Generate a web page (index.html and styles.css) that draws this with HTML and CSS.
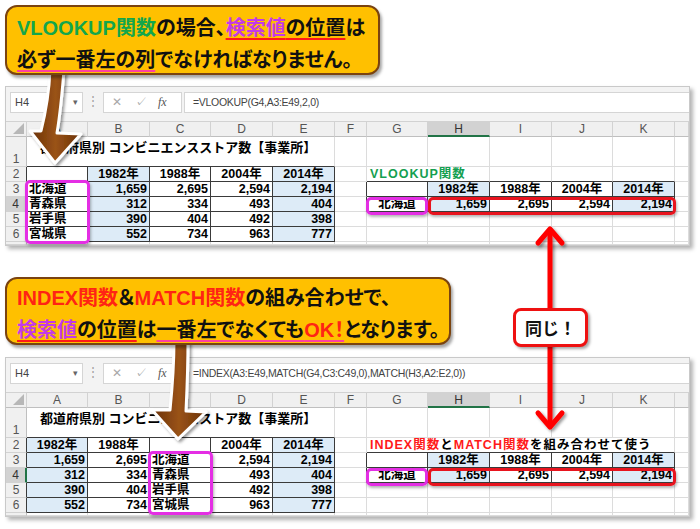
FILE: index.html
```html
<!DOCTYPE html>
<html lang="ja">
<head>
<meta charset="utf-8">
<title>VLOOKUP vs INDEX MATCH</title>
<link rel="stylesheet" href="styles.css">
</head>
<body>
<div class="page">
  <div class="callout c1">
    <div><span class="grn">VLOOKUP関数</span>の場合、<span class="ul-red"><span class="pur">検索値</span>の位置</span>は</div>
    <div><span class="ul-pink">必ず一番左の列</span>でなければなりません。</div>
  </div>

  <div class="win w1">
    <div class="fbar">
      <div class="namebox"><span>H4</span><span class="dd">▾</span></div>
      <div class="sep">⋮</div>
      <div class="fxbox"><span class="x">✕</span><span class="ck">✓</span><span class="fx">fx</span></div>
      <div class="formula">=VLOOKUP(G4,A3:E49,2,0)</div>
    </div>
    <div class="grid">
      <div class="h corner"></div><div class="h">A</div><div class="h">B</div><div class="h">C</div><div class="h">D</div><div class="h">E</div><div class="h">F</div><div class="h">G</div><div class="h s">H</div><div class="h">I</div><div class="h">J</div><div class="h">K</div><div class="h"></div>

      <div class="r">1</div><div class="t kb">都道府県別 コンビニエンスストア数【事業所】</div><div></div><div></div><div></div><div></div><div></div><div></div><div></div>

      <div class="r kr">2</div><div class="k"></div><div class="k b m">1982年</div><div class="k m">1988年</div><div class="k m">2004年</div><div class="k b m">2014年</div><div></div><div class="kb lbl grn sp2">VLOOKUP関数</div><div class="kb"></div><div class="kb"></div><div class="kb"></div><div></div>

      <div class="r kr">3</div><div class="k">北海道</div><div class="k b n">1,659</div><div class="k n">2,695</div><div class="k n">2,594</div><div class="k b n">2,194</div><div class="kr"></div><div class="k"></div><div class="k b m">1982年</div><div class="k m">1988年</div><div class="k m">2004年</div><div class="k b m">2014年</div><div></div>

      <div class="r kr sr">4</div><div class="k">青森県</div><div class="k b n">312</div><div class="k n">334</div><div class="k n">493</div><div class="k b n">404</div><div class="kr"></div><div class="k m">北海道</div><div class="k b n">1,659</div><div class="k n">2,695</div><div class="k n">2,594</div><div class="k b n">2,194</div><div></div>

      <div class="r kr">5</div><div class="k">岩手県</div><div class="k b n">390</div><div class="k n">404</div><div class="k n">492</div><div class="k b n">398</div><div></div><div></div><div></div><div></div><div></div><div></div><div></div>

      <div class="r kr">6</div><div class="k">宮城県</div><div class="k b n">552</div><div class="k n">734</div><div class="k n">963</div><div class="k b n">777</div><div></div><div></div><div></div><div></div><div></div><div></div><div></div>

      <div class="r"></div><div></div><div></div><div></div><div></div><div></div><div></div><div></div><div></div><div></div><div></div><div></div><div></div>
    </div>
    <div class="hl hl-mg pos-a"></div>
    <div class="hl hl-mg pos-g"></div>
    <div class="hl hl-rd pos-r"></div>
  </div>

  <div class="callout c2">
    <div><span class="red">INDEX関数</span>＆<span class="red">MATCH関数</span>の組み合わせで、</div>
    <div><span class="ul-red"><span class="pur">検索値</span>の位置</span>は<span class="ul-pink">一番左でなくても<span class="red">OK！</span></span>となります。</div>
  </div>

  <div class="win w2">
    <div class="fbar">
      <div class="namebox"><span>H4</span><span class="dd">▾</span></div>
      <div class="sep">⋮</div>
      <div class="fxbox"><span class="x">✕</span><span class="ck">✓</span><span class="fx">fx</span></div>
      <div class="formula">=INDEX(A3:E49,MATCH(G4,C3:C49,0),MATCH(H3,A2:E2,0))</div>
    </div>
    <div class="grid">
      <div class="h corner"></div><div class="h">A</div><div class="h">B</div><div class="h">C</div><div class="h">D</div><div class="h">E</div><div class="h">F</div><div class="h">G</div><div class="h s">H</div><div class="h">I</div><div class="h">J</div><div class="h">K</div><div class="h"></div>

      <div class="r">1</div><div class="t kb">都道府県別 コンビニエンスストア数【事業所】</div><div></div><div></div><div></div><div></div><div></div><div></div><div></div>

      <div class="r kr">2</div><div class="k b m">1982年</div><div class="k m">1988年</div><div class="k"></div><div class="k m">2004年</div><div class="k b m">2014年</div><div></div><div class="kb lbl sp5"><span class="red">INDEX関数</span>と<span class="red">MATCH関数</span>を組み合わせて使う</div><div></div>

      <div class="r kr">3</div><div class="k b n">1,659</div><div class="k n">2,695</div><div class="k">北海道</div><div class="k n">2,594</div><div class="k b n">2,194</div><div class="kr"></div><div class="k"></div><div class="k b m">1982年</div><div class="k m">1988年</div><div class="k m">2004年</div><div class="k b m">2014年</div><div></div>

      <div class="r kr sr">4</div><div class="k b n">312</div><div class="k n">334</div><div class="k">青森県</div><div class="k n">493</div><div class="k b n">404</div><div class="kr"></div><div class="k m">北海道</div><div class="k b n">1,659</div><div class="k n">2,695</div><div class="k n">2,594</div><div class="k b n">2,194</div><div></div>

      <div class="r kr">5</div><div class="k b n">390</div><div class="k n">404</div><div class="k">岩手県</div><div class="k n">492</div><div class="k b n">398</div><div></div><div></div><div></div><div></div><div></div><div></div><div></div>

      <div class="r kr">6</div><div class="k b n">552</div><div class="k n">734</div><div class="k">宮城県</div><div class="k n">963</div><div class="k b n">777</div><div></div><div></div><div></div><div></div><div></div><div></div><div></div>

      <div class="r"></div><div></div><div></div><div></div><div></div><div></div><div></div><div></div><div></div><div></div><div></div><div></div><div></div>
    </div>
    <div class="hl hl-mg pos-c"></div>
    <div class="hl hl-mg pos-g"></div>
    <div class="hl hl-rd pos-r"></div>
  </div>

  <svg class="overlay" width="700" height="529" viewBox="0 0 700 529" aria-hidden="true">
    <defs>
      <linearGradient id="brown" x1="0" y1="0" x2="1" y2="0">
        <stop offset="0" stop-color="#6a3105"/>
        <stop offset="0.5" stop-color="#9a5318"/>
        <stop offset="1" stop-color="#6a3105"/>
      </linearGradient>
      <filter id="sh" x="-30%" y="-30%" width="160%" height="160%">
        <feDropShadow dx="2" dy="2" stdDeviation="1.5" flood-color="#000" flood-opacity="0.4"/>
      </filter>
    </defs>
    <path d="M50 70 C49 95 45 115 41 131 L30 131 L55 163 L81 134 L57 133 C60 115 62 95 64 70 Z" fill="url(#brown)" stroke="#fff" stroke-width="3" stroke-linejoin="round" filter="url(#sh)"/>
    <path d="M174 340 C174 370 172 390 170 410 L152 410 L178 439 L206 412 L186 411 C187 390 188 370 188 340 Z" fill="url(#brown)" stroke="#fff" stroke-width="3" stroke-linejoin="round" filter="url(#sh)"/>
    <g stroke="#ff0000" stroke-width="5" stroke-linecap="round" stroke-linejoin="round" fill="none" filter="url(#sh)">
      <line x1="550" y1="231" x2="550" y2="425"/>
      <polyline points="538,243 550,229 562,243"/>
      <polyline points="538,413 550,427 562,413"/>
    </g>
  </svg>

  <div class="same">同じ！</div>
</div>
</body>
</html>
```

FILE: styles.css
```css
* { box-sizing: border-box; }
html, body { margin: 0; padding: 0; background: #fff; }

.page {
  position: relative;
  width: 700px;
  height: 529px;
  padding: 5px 0 0 5px;
  overflow: hidden;
  font-family: "Liberation Sans", "Noto Sans CJK JP", sans-serif;
}

/* callouts */
.callout {
  position: relative;
  z-index: 2;
  background: #ffc000;
  border: 2px solid #7a4310;
  border-radius: 12px;
  box-shadow: 2px 3px 3px rgba(0, 0, 0, 0.35);
  font: 700 20px/32px "Liberation Sans", "Noto Sans CJK JP", sans-serif;
  font-feature-settings: "palt";
  color: #111;
  white-space: nowrap;
}
.c1 { width: 375px; height: 70px; padding: 5px 0 0 10px; margin-bottom: 11px; }
.c2 { width: 446px; height: 68px; padding: 3px 0 0 10px; margin-bottom: 12px; }

.grn { color: #13a64c; }
.pur { color: #c43ae8; }
.red { color: #ff2414; }
.ul-red {
  text-decoration: underline;
  text-decoration-color: #ff1a1a;
  text-decoration-thickness: 2px;
  text-underline-offset: 3px;
}
.ul-pink {
  text-decoration: underline;
  text-decoration-color: #ff3fa0;
  text-decoration-thickness: 2px;
  text-underline-offset: 3px;
}

/* spreadsheet windows */
.win {
  position: relative;
  width: 685px;
  height: 160px;
  background: #f3f3f3;
  border: 1px solid #c9c9c9;
  box-shadow: 3px 3px 4px rgba(0, 0, 0, 0.3);
}
.w1 { margin-bottom: 31px; }

.fbar {
  display: flex;
  height: 21px;
  margin: 5px 0 0 4px;
  font: 400 11px/19px "Liberation Sans", sans-serif;
  color: #444;
}
.namebox {
  width: 73px;
  background: #fff;
  border: 1px solid #d5d5d5;
  display: flex;
  justify-content: space-between;
  padding: 0 4px;
}
.namebox .dd { font-size: 9px; color: #666; }
.sep { width: 20px; text-align: center; color: #a0a0a0; font-size: 12px; }
.fxbox {
  width: 79px;
  background: #fff;
  border: 1px solid #d5d5d5;
  display: flex;
  padding-left: 8px;
}
.fxbox span { width: 26px; text-align: left; }
.fxbox .x, .fxbox .ck { color: #a8a8a8; font-size: 12px; }
.fxbox .fx { font: italic 12px/19px "Liberation Serif", serif; color: #555; }
.formula {
  flex: 1;
  margin-left: 2px;
  background: #fff;
  border: 1px solid #d5d5d5;
  border-right: none;
  padding-left: 8px;
  font-size: 10.5px;
  letter-spacing: -0.3px;
  color: #444;
}

.grid {
  display: grid;
  grid-template-columns: 21px 61px 62px 61px 62px 62px 32px 61px 62px 62px 61px 62px 1fr;
  grid-template-rows: 16px 30px repeat(5, 15px) 1fr;
  height: 124px;
  margin-top: 8px;
  background: #fff;
}
.grid > div {
  border-right: 1px solid #dcdcdc;
  border-bottom: 1px solid #dcdcdc;
  font: 700 12.5px/14px "Liberation Sans", "Noto Sans CJK JP", sans-serif;
  color: #000;
  padding: 0 2px;
  white-space: nowrap;
  min-width: 0;
}
.grid .h {
  background: #f0f0f0;
  border-top: 1px solid #d2d2d2;
  border-right-color: #d2d2d2;
  border-bottom-color: #bfbfbf;
  font: 400 12px/14px "Liberation Sans", sans-serif;
  color: #555;
  text-align: center;
}
.grid .s { background: #d2d2d2; border-bottom: 2px solid #217346; color: #333; }
.grid .corner { position: relative; }
.grid .corner::after {
  content: "";
  position: absolute;
  right: 2px;
  bottom: 2px;
  width: 0;
  height: 0;
  border-left: 11px solid transparent;
  border-bottom: 11px solid #b7b7b7;
}
.grid .r {
  background: #f0f0f0;
  border-right-color: #bfbfbf;
  border-bottom-color: #d2d2d2;
  font: 400 12px/14px "Liberation Sans", sans-serif;
  color: #555;
  display: flex;
  align-items: flex-end;
  justify-content: center;
}
.grid .k { border-right-color: #3a3a3a; border-bottom-color: #3a3a3a; }
.grid .kb { border-bottom-color: #3a3a3a; }
.grid .kr { border-right-color: #3a3a3a; }
.grid .sr { background: #d2d2d2; border-right: 2px solid #217346; color: #333; }
.grid .b { background: #ddebf7; }
.grid .n { text-align: right; }
.grid .m { text-align: center; }
.grid .t { grid-column: span 5; font-size: 13px; line-height: 22px; padding-left: 13px; }
.grid .lbl { letter-spacing: 1px; padding-left: 3px; }
.grid .grn { color: #14a050; }
.grid .red { color: #ff1a1a; }
.grid .sp2 { grid-column: span 2; }
.grid .sp5 { grid-column: span 5; }

/* highlight frames over the grid */
.hl { position: absolute; border-radius: 5px; box-shadow: 1px 2px 3px rgba(0, 0, 0, 0.3); }
.hl-mg { border: 3px solid #e42ee4; }
.hl-rd { border: 3px solid #e8141e; }
.pos-a { left: 19px; top: 93px; width: 65px; height: 64px; }
.pos-c { left: 142px; top: 93px; width: 65px; height: 64px; }
.pos-g { left: 360px; top: 110px; width: 62px; height: 18px; }
.pos-r { left: 422px; top: 110px; width: 248px; height: 18px; }

/* overlay arrows */
.overlay { position: absolute; left: 0; top: 0; z-index: 1; pointer-events: none; }

.same {
  position: absolute;
  z-index: 3;
  left: 513px;
  top: 308px;
  width: 75px;
  height: 39px;
  background: #fff;
  border: 3px solid #ee1111;
  border-radius: 8px;
  box-shadow: 2px 2px 3px rgba(0, 0, 0, 0.35);
  font: 700 17px/33px "Noto Sans CJK JP", sans-serif;
  text-align: center;
  color: #111;
}
```
